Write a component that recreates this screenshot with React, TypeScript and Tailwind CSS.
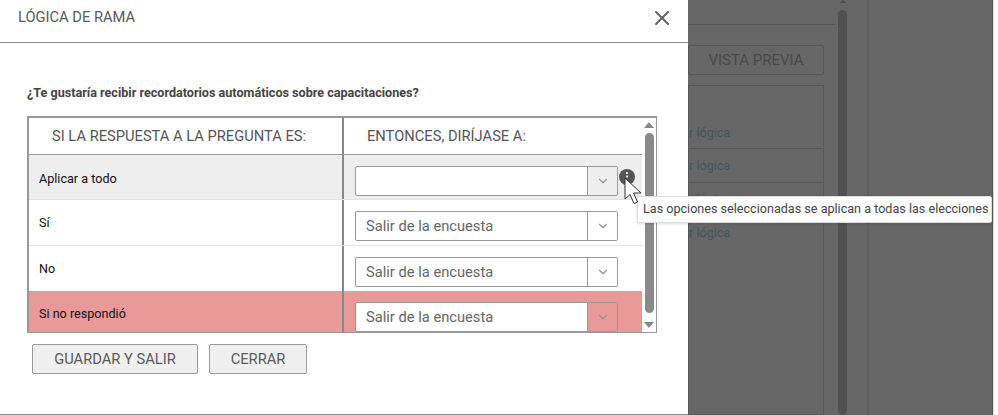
import { ChevronDown, X } from "lucide-react"

const font = "font-['Roboto','Liberation_Sans',sans-serif]"

const rows = [
  { label: "Aplicar a todo", value: "", rowClass: "h-[45px] bg-[#eeeeee] border-b border-[#e2e2e2]", labelClass: "pt-[4px]", arrowClass: "bg-[#eeeeee]" },
  { label: "Sí", value: "Salir de la encuesta", rowClass: "h-[46px] bg-white border-b border-[#e2e2e2]", labelClass: "pt-[2px]", arrowClass: "bg-white" },
  { label: "No", value: "Salir de la encuesta", rowClass: "h-[45px] bg-white", labelClass: "pt-[2px]", arrowClass: "bg-white" },
  { label: "Si no respondió", value: "Salir de la encuesta", rowClass: "h-[41px] bg-[#ea9999]", labelClass: "pt-[5px]", arrowClass: "bg-[#ea9999]" },
]

function Select({ value, arrowClass }: { value: string; arrowClass: string }) {
  return (
    <div className="flex h-[30px] w-[263px] overflow-hidden rounded-[2px] border border-[#999999] bg-white">
      <div className="flex-1 pl-[10px] text-[14.7px] leading-[28px] text-[#666666]">{value}</div>
      <div className={`flex w-[30px] items-center justify-center border-l border-[#999999] ${arrowClass}`}>
        <ChevronDown size={14} strokeWidth={2} className="text-[#949494]" />
      </div>
    </div>
  )
}

function Background() {
  return (
    <div className="flex h-full w-[305px] shrink-0 border-r border-[#555555] bg-[#666666]">
      <div className="w-[147px] shrink-0">
        <div className="mt-[24px] h-px bg-[#555555]" />
        <div className="mt-[20px] flex h-[30px] w-[136px] items-center justify-center rounded-[2px] border border-[#585858] text-[15px] text-[#4a4a4a]">
          VISTA PREVIA
        </div>
        <div className="mt-[10px] h-[330px] w-[136px] border border-[#585858] text-[12.6px] leading-[16px] text-[#42585f]">
          <div className="flex h-[63px] items-end border-b border-[#585858] pb-[7px]">r lógica</div>
          <div className="flex h-[34px] items-end border-b border-[#585858] pb-[8px]">r lógica</div>
          <div className="flex h-[33px] items-end border-b border-[#585858] pb-[8px]">r lógica</div>
          <div className="flex h-[33px] items-end pb-[8px]">r lógica</div>
        </div>
      </div>
      <div className="ml-[3px] flex w-[9px] flex-col items-center">
        <div className="h-0 w-0 border-x-[4px] border-b-[3px] border-x-transparent border-b-[#505050]" />
        <div className="mt-[7px] h-[420px] w-[9px] rounded-full bg-[#505050]" />
      </div>
      <div className="ml-[20px] w-[2px] bg-[#5e5e5e]" />
    </div>
  )
}

export default function App() {
  return (
    <div className={`relative flex h-[415px] w-[998px] overflow-hidden bg-white ${font}`}>
      <div className="flex h-[415px] w-[688px] shrink-0 flex-col border-b border-[#8a8a8a] bg-white">
        <div className="flex h-[43px] shrink-0 items-start justify-between border-b border-[#8c8c8c] pl-[18px] pr-[14px] pt-[8px]">
          <span className="text-[14.7px] leading-[18px] text-[#595959]">LÓGICA DE RAMA</span>
          <X size={24} strokeWidth={2} className="mt-[-2px] text-[#666666]" />
        </div>

        <div className="ml-[27px] mt-[42px] text-[12.6px] font-bold leading-[16px] text-[#444444]">
          ¿Te gustaría recibir recordatorios automáticos sobre capacitaciones?
        </div>

        <div className="ml-[27px] mt-[15px] flex h-[217px] w-[630px] border border-l-2 border-t-2 border-[#999999]">
          <div className="flex-1">
            <div className="flex h-[37px] border-b border-[#999999]">
              <div className="w-[313px] pl-[23px] text-[14.7px] leading-[36px] text-[#555555]">SI LA RESPUESTA A LA PREGUNTA ES:</div>
              <div className="flex-1 border-l-2 border-[#888888] pl-[23px] text-[14.7px] leading-[36px] text-[#555555]">ENTONCES, DIRÍJASE A:</div>
            </div>
            {rows.map((row) => (
              <div key={row.label} className={`flex ${row.rowClass}`}>
                <div className={`flex w-[313px] items-center pl-[10px] text-[12.6px] text-[#111111] ${row.labelClass}`}>
                  {row.label}
                </div>
                <div className="flex-1 border-l-2 border-[#888888] pl-[11px] pt-[11px]">
                  <Select value={row.value} arrowClass={row.arrowClass} />
                </div>
              </div>
            ))}
          </div>
          <div className="flex w-[14px] shrink-0 flex-col items-center bg-white">
            <div className="mt-[4px] h-0 w-0 border-x-[5px] border-b-[6px] border-x-transparent border-b-[#888888]" />
            <div className="mt-[5px] h-[180px] w-[9px] rounded-full bg-[#8a8a8a]" />
            <div className="mt-[9px] h-0 w-0 border-x-[5px] border-t-[6px] border-x-transparent border-t-[#888888]" />
          </div>
        </div>

        <div className="ml-[32px] mt-[11px] flex gap-[11px]">
          <button className="h-[30px] w-[166px] rounded-[2px] border border-[#999999] bg-[#f0f0f0] text-[14.7px] text-[#595959]">GUARDAR Y SALIR</button>
          <button className="h-[30px] w-[98px] rounded-[2px] border border-[#999999] bg-[#f0f0f0] text-[14.7px] text-[#595959]">CERRAR</button>
        </div>
      </div>

      <Background />
      <div className="flex-1 border-l border-[#dddddd] bg-white" />

      {/* info dot, cursor and tooltip sit over the dialog */}
      <svg className="absolute left-[619px] top-[169px]" width="16" height="16" viewBox="0 0 16 16">
        <circle cx="8" cy="8" r="8" fill="#555555" />
        <rect x="7" y="3" width="2" height="2" fill="#dddddd" />
        <rect x="7" y="6.5" width="2" height="2" fill="#dddddd" />
      </svg>
      <div className="absolute left-[637px] top-[196px] flex h-[27px] w-[355px] items-center whitespace-nowrap rounded-[2px] border border-[#dddddd] bg-white pl-[5px] text-[12.6px] text-[#444444] shadow-sm">
        Las opciones seleccionadas se aplican a todas las elecciones
      </div>
      <svg className="absolute left-[624px] top-[177px]" width="19" height="28" viewBox="0 0 19 28">
        <path d="M1 1 L1 22 L6 17.5 L10 26.5 L13.5 25 L9.5 16 L17 16 Z" fill="#ffffff" stroke="#333333" strokeWidth="1" strokeLinejoin="round" />
      </svg>
    </div>
  )
}
